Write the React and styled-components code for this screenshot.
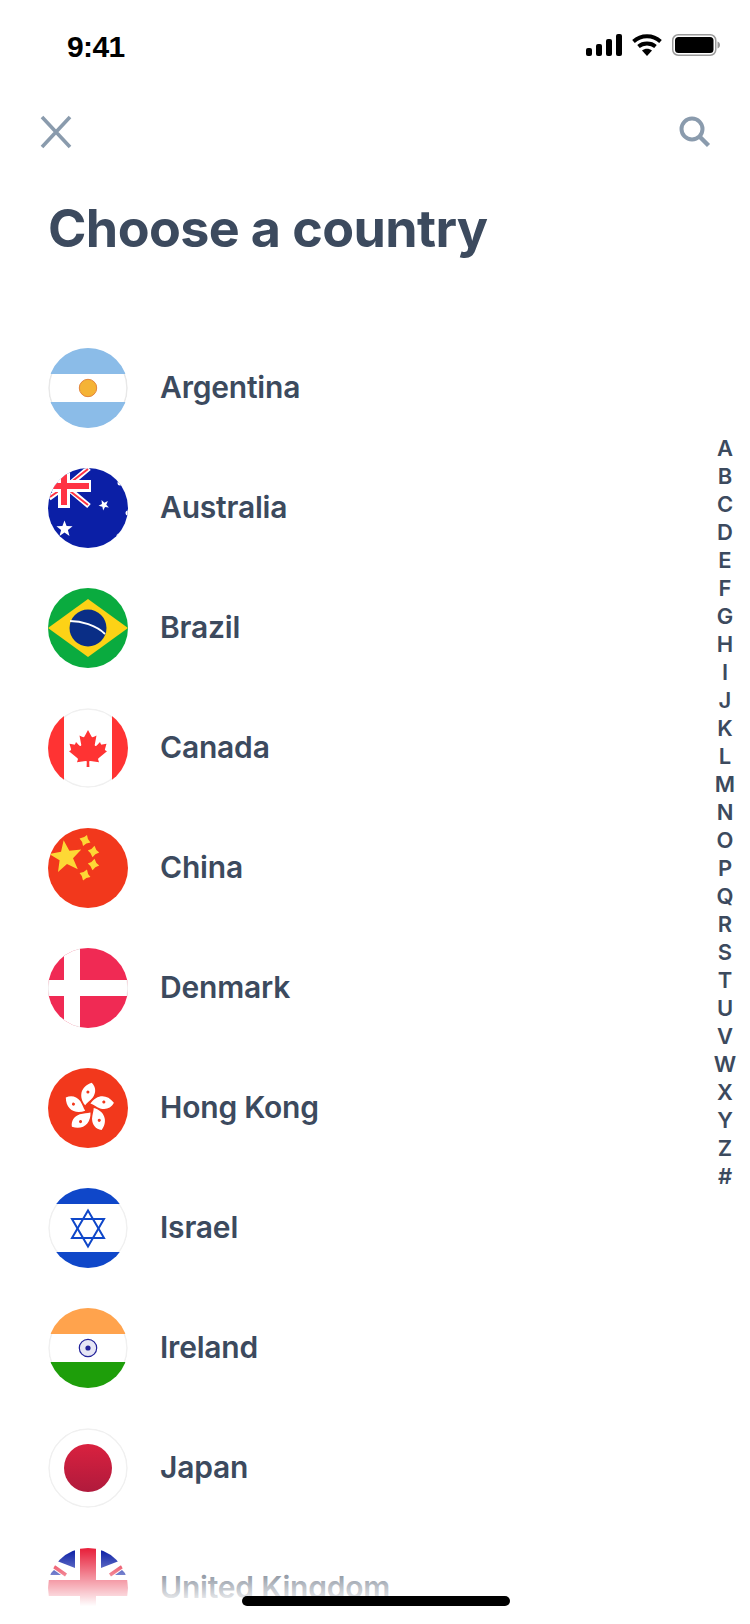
import React from 'react';
import styled, { createGlobalStyle } from 'styled-components';

const GlobalStyle = createGlobalStyle`
  html, body { margin: 0; padding: 0; background: #fff; }
  body { font-family: Inter, "Noto Sans", sans-serif; }
`;

const Screen = styled.div`
  position: relative;
  width: 750px;
  height: 1624px;
  overflow: hidden;
  background: #fff;
`;

const StatusBar = styled.div`
  height: 92px;
  display: flex;
  justify-content: space-between;
  align-items: center;
  padding: 1px 30px 0 67px;
  box-sizing: border-box;
`;

const Clock = styled.span`
  font-family: "Liberation Sans", Arial, sans-serif;
  font-weight: 700;
  font-size: 30px;
  letter-spacing: -0.6px;
  color: #000;
`;

const StatusIcons = styled.div`
  margin-top: -3px;
  display: flex;
  align-items: center;
  gap: 10px;
`;

const NavBar = styled.div`
  height: 50px;
  margin-top: 15px;
  display: flex;
  justify-content: space-between;
  align-items: center;
  padding: 0 39px 0 40px;
`;

const Title = styled.h1`
  margin: 37px 0 0 48px;
  font-size: 52px;
  line-height: 70px;
  font-weight: 700;
  letter-spacing: -0.6px;
  color: #3c4a5e;
`;

const CountryList = styled.ul`
  list-style: none;
  margin: 64px 0 0;
  padding: 0 0 0 48px;
`;

const CountryRow = styled.li`
  height: 120px;
  display: flex;
  align-items: center;
  gap: 32px;
`;

const CountryName = styled.span`
  margin-top: -2px;
  font-size: 30px;
  font-weight: 600;
  letter-spacing: -0.2px;
  color: #3c4a5e;
`;

const FlagSvg = styled.svg`
  width: 80px;
  height: 80px;
  flex: none;
  display: block;
  border-radius: 50%;
`;

const AlphaIndex = styled.div`
  position: absolute;
  top: 434px;
  right: 10px;
  width: 30px;
  display: flex;
  flex-direction: column;
  align-items: center;
`;

const AlphaLetter = styled.span`
  height: 28px;
  line-height: 28px;
  font-size: 22px;
  font-weight: 600;
  color: #3c4a5e;
`;

const BottomFade = styled.div`
  position: absolute;
  left: 0;
  right: 0;
  bottom: 0;
  height: 74px;
  background: linear-gradient(to bottom, rgba(255,255,255,0) 0%, rgba(255,255,255,1) 76%);
`;

const HomeIndicator = styled.div`
  position: absolute;
  left: 242px;
  bottom: 18px;
  width: 268px;
  height: 10px;
  border-radius: 5px;
  background: #000;
`;

const Ring = ({ color = '#f0f0f0' }) => (
  <circle cx="40" cy="40" r="39" fill="none" stroke={color} strokeWidth="1.5" />
);

const fourPoint = (cx, cy, r, rot) => (
  <path
    transform={`translate(${cx} ${cy}) rotate(${rot})`}
    d={`M0 ${-r}Q${r * 0.3} ${-r * 0.3} ${r} 0Q${r * 0.3} ${r * 0.3} 0 ${r}Q${-r * 0.3} ${r * 0.3} ${-r} 0Q${-r * 0.3} ${-r * 0.3} 0 ${-r}Z`}
    fill="#fdd835"
  />
);

const starPoints = (cx, cy, r, rot = 0) => {
  const pts = [];
  for (let i = 0; i < 10; i++) {
    const rad = i % 2 === 0 ? r : r * 0.42;
    const a = ((i * 36 + rot - 90) * Math.PI) / 180;
    pts.push(`${(cx + rad * Math.cos(a)).toFixed(2)},${(cy + rad * Math.sin(a)).toFixed(2)}`);
  }
  return pts.join(' ');
};

const Argentina = () => (
  <FlagSvg viewBox="0 0 80 80">
    <rect width="80" height="80" fill="#fff" />
    <Ring color="#e8e8e8" />
    <rect width="80" height="26" fill="#8bbce8" />
    <rect y="54" width="80" height="26" fill="#8bbce8" />
    <circle cx="40" cy="40" r="8.7" fill="#f5b335" stroke="#e2843a" strokeWidth="1" />
  </FlagSvg>
);

const Australia = () => (
  <FlagSvg viewBox="0 0 80 80">
    <rect width="80" height="80" fill="#0b1fa6" />
    <path d="M41 0L22 16M22 22L41 38M1 30L12 22M5 5L12 12" fill="none" stroke="#fff" strokeWidth="5.5" />
    <path d="M40 1L22 15M22 23L40 37M2 29L12 22" fill="none" stroke="#ff3344" strokeWidth="2" />
    <rect x="10" y="0" width="12" height="40" fill="#fff" />
    <rect x="0" y="12" width="43" height="12" fill="#fff" />
    <rect x="13" y="0" width="6" height="37" fill="#ff3344" />
    <rect x="0" y="15" width="41" height="6" fill="#ff3344" />
    <polygon points={starPoints(16.5, 61, 8.5)} fill="#fff" />
    <polygon points={starPoints(56, 37, 5.5, 45)} fill="#fff" />
    <circle cx="72" cy="15" r="2.5" fill="#fff" />
    <circle cx="80" cy="45" r="2.5" fill="#fff" />
    <circle cx="71" cy="68" r="2.5" fill="#fff" />
  </FlagSvg>
);

const Brazil = () => (
  <FlagSvg viewBox="0 0 80 80">
    <rect width="80" height="80" fill="#0aab3f" />
    <polygon points="40,11 80,40 40,69 0,40" fill="#fdd216" />
    <circle cx="40" cy="40" r="18.5" fill="#0a2e86" />
    <path d="M22 33C33 33 48 37 57 46" fill="none" stroke="#fff" strokeWidth="1.8" />
  </FlagSvg>
);

const Canada = () => (
  <FlagSvg viewBox="0 0 80 80">
    <rect width="80" height="80" fill="#fff" />
    <Ring />
    <rect width="16" height="80" fill="#ff3333" />
    <rect x="64" width="16" height="80" fill="#ff3333" />
    <path
      d="M40 22L43.5 28.5C44 29.5 45 29.4 46 28.8L48.5 27.5L46.8 36.5C46.5 38 47.8 38.6 48.8 37.6L52 34L52.8 36C53 36.6 53.6 36.7 54.2 36.6L58.5 35.7L57 41C56.8 41.7 56.9 42.2 57.5 42.5L59 43.3L50.8 50C50 50.7 50 51.2 50.3 52L51 54.3L42.5 53L41.2 53.2L41.4 59L38.6 59L38.8 53.2L37.5 53L29 54.3L29.7 52C30 51.2 30 50.7 29.2 50L21 43.3L22.5 42.5C23.1 42.2 23.2 41.7 23 41L21.5 35.7L25.8 36.6C26.4 36.7 27 36.6 27.2 36L28 34L31.2 37.6C32.2 38.6 33.5 38 33.2 36.5L31.5 27.5L34 28.8C35 29.4 36 29.5 36.5 28.5Z"
      fill="#ff3333"
    />
  </FlagSvg>
);

const China = () => (
  <FlagSvg viewBox="0 0 80 80">
    <rect width="80" height="80" fill="#f2381c" />
    <polygon points={starPoints(18, 29, 17, -8)} fill="#fdd835" />
    {fourPoint(37, 12.5, 5.8, 20)}
    {fourPoint(45.5, 23.5, 5.8, 10)}
    {fourPoint(45.5, 36.5, 5.8, 10)}
    {fourPoint(37, 47, 5.8, 20)}
  </FlagSvg>
);

const Denmark = () => (
  <FlagSvg viewBox="0 0 80 80">
    <rect width="80" height="80" fill="#f02a54" />
    <rect x="16" width="16" height="80" fill="#fff" />
    <rect y="32" width="80" height="16" fill="#fff" />
    <path d="M32 1A39 39 0 0 0 16 6M1 32A39 39 0 0 0 1 48M79 32A39 39 0 0 1 79 48M16 74A39 39 0 0 0 32 79" fill="none" stroke="#f0f0f0" strokeWidth="1.5" />
  </FlagSvg>
);

const HongKong = () => (
  <FlagSvg viewBox="0 0 80 80">
    <rect width="80" height="80" fill="#f2381c" />
    {[0, 72, 144, 216, 288].map((deg) => (
      <g key={deg} transform={`rotate(${deg} 41 40) translate(41 40) scale(1.1) translate(-41 -40)`}>
        <path d="M37.5 37.5C31.5 30 33 20.5 43.5 17C47.5 21 47.5 26 44.5 30.5C42 33.5 39.5 35 37.5 37.5Z" fill="#fff" />
        <circle cx="40" cy="25.5" r="1.4" fill="#f2381c" />
      </g>
    ))}
  </FlagSvg>
);

const Israel = () => (
  <FlagSvg viewBox="0 0 80 80">
    <rect width="80" height="80" fill="#fff" />
    <Ring />
    <rect width="80" height="16" fill="#0f47c9" />
    <rect y="64" width="80" height="16" fill="#0f47c9" />
    <g fill="none" stroke="#0f47c9" strokeWidth="2">
      <polygon points="40,22.5 56,50 24,50" />
      <polygon points="40,58.5 56,31 24,31" />
    </g>
  </FlagSvg>
);

const India = () => (
  <FlagSvg viewBox="0 0 80 80">
    <rect width="80" height="80" fill="#fff" />
    <Ring />
    <rect width="80" height="26" fill="#ffa34d" />
    <rect y="54" width="80" height="26" fill="#1e9e0a" />
    <circle cx="40" cy="40" r="8.7" fill="#e6e6f5" stroke="#23239a" strokeWidth="1.2" />
    <circle cx="40" cy="40" r="2.6" fill="#23239a" />
  </FlagSvg>
);

const Japan = () => (
  <FlagSvg viewBox="0 0 80 80">
    <defs>
      <linearGradient id="jpDisc" x1="0" y1="0" x2="0" y2="1">
        <stop offset="0" stopColor="#d9213f" />
        <stop offset="1" stopColor="#b01a3c" />
      </linearGradient>
    </defs>
    <rect width="80" height="80" fill="#fff" />
    <Ring />
    <circle cx="40" cy="40" r="24" fill="url(#jpDisc)" />
  </FlagSvg>
);

const UnitedKingdom = () => (
  <FlagSvg viewBox="0 0 80 80">
    <rect width="80" height="80" fill="#fff" />
    <polygon points="27,0 27,20 9,13 18,0" fill="#0b1fa6" />
    <polygon points="53,0 53,20 71,13 62,0" fill="#0b1fa6" />
    <polygon points="1,27 13,27 6,22" fill="#0b1fa6" />
    <polygon points="79,27 67,27 74,22" fill="#0b1fa6" />
    <path d="M5 18L18 27M75 18L62 27" stroke="#e8253f" strokeWidth="3.5" />
    <rect x="32" width="16" height="80" fill="#e8253f" />
    <rect y="32" width="80" height="16" fill="#e8253f" />
  </FlagSvg>
);

const countries = [
  ['Argentina', Argentina],
  ['Australia', Australia],
  ['Brazil', Brazil],
  ['Canada', Canada],
  ['China', China],
  ['Denmark', Denmark],
  ['Hong Kong', HongKong],
  ['Israel', Israel],
  ['Ireland', India],
  ['Japan', Japan],
  ['United Kingdom', UnitedKingdom],
];

const letters = 'ABCDEFGHIJKLMNOPQRSTUVWXYZ#'.split('');

export default function App() {
  return (
    <Screen>
      <GlobalStyle />
      <StatusBar>
        <Clock>9:41</Clock>
        <StatusIcons>
          <svg width="36" height="24" viewBox="0 0 36 24">
            <rect x="0" y="15" width="6" height="8" rx="2" fill="#000" />
            <rect x="10" y="11" width="6" height="12" rx="2" fill="#000" />
            <rect x="20" y="6" width="6" height="17" rx="2" fill="#000" />
            <rect x="30" y="1" width="6" height="22" rx="2" fill="#000" />
          </svg>
          <svg width="30" height="24" viewBox="0 0 30 24">
            <path d="M1.5 8.5C9 1.5 21 1.5 28.5 8.5" fill="none" stroke="#000" strokeWidth="3.8" />
            <path d="M6.5 13.5C11 9.5 19 9.5 23.5 13.5" fill="none" stroke="#000" strokeWidth="3.8" />
            <path d="M10 17.5C13 15 17 15 20 17.5L15 23Z" fill="#000" />
          </svg>
          <svg width="48" height="24" viewBox="0 0 48 24">
            <rect x="0.75" y="1.75" width="43" height="20.5" rx="5.5" fill="none" stroke="#999" strokeWidth="1.5" />
            <rect x="3" y="4" width="38.5" height="16" rx="3.5" fill="#000" />
            <path d="M45.5 8.5C47 9 48 10.3 48 12C48 13.7 47 15 45.5 15.5Z" fill="#999" />
          </svg>
        </StatusIcons>
      </StatusBar>
      <NavBar>
        <svg width="32" height="34" viewBox="0 0 32 34">
          <path d="M2 2L30 32M30 2L2 32" fill="none" stroke="#8a9bad" strokeWidth="3.6" />
        </svg>
        <svg width="32" height="32" viewBox="0 0 32 32">
          <circle cx="13" cy="13" r="10.5" fill="none" stroke="#8a9bad" strokeWidth="4" />
          <path d="M20.5 20.5L29.5 29.5" fill="none" stroke="#8a9bad" strokeWidth="4.4" />
        </svg>
      </NavBar>
      <Title>Choose a country</Title>
      <CountryList>
        {countries.map(([name, Flag]) => (
          <CountryRow key={name}>
            <Flag />
            <CountryName>{name}</CountryName>
          </CountryRow>
        ))}
      </CountryList>
      <AlphaIndex>
        {letters.map((l) => (
          <AlphaLetter key={l}>{l}</AlphaLetter>
        ))}
      </AlphaIndex>
      <BottomFade />
      <HomeIndicator />
    </Screen>
  );
}
